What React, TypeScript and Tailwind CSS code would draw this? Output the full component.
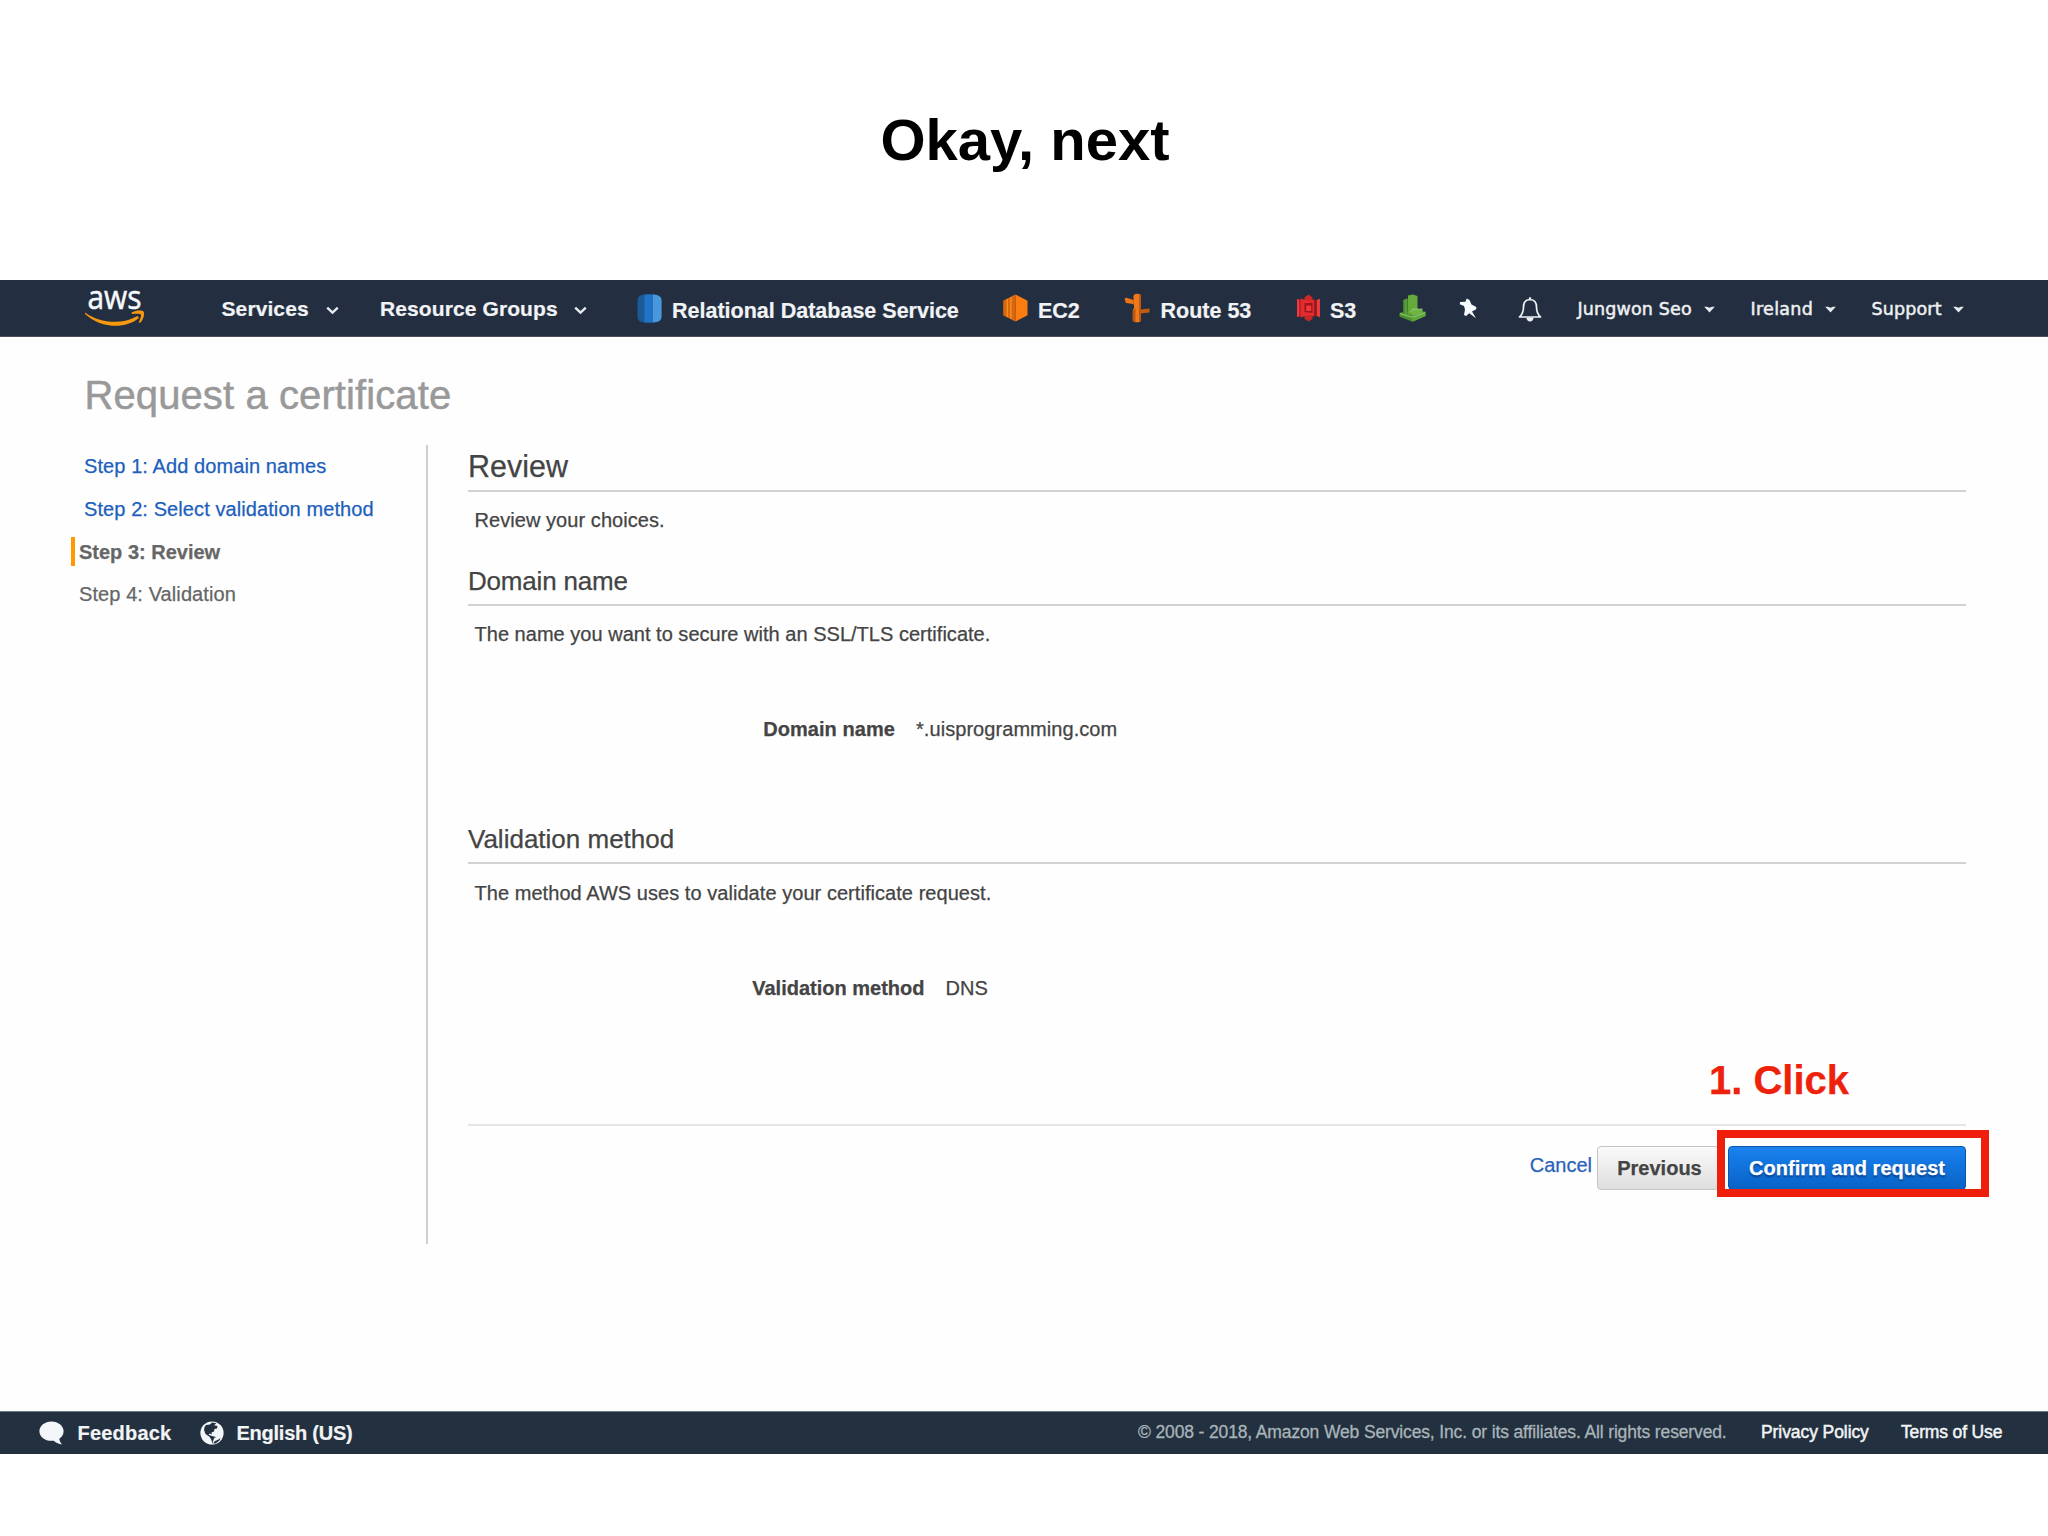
import type { ReactNode } from "react";

function AwsLogo() {
  return (
    <svg className="ml-[84px] h-[56px] w-[62px] shrink-0 overflow-visible" viewBox="0 -4 62 56">
      <text x="3.500" y="24.500" fontFamily="Open Sans, sans-serif" fontSize="32" fill="#f7fafc" stroke="#f7fafc" strokeWidth="0.500" textLength="54" lengthAdjust="spacingAndGlyphs">
        aws
      </text>
      <path d="M1 28.500 C16 39.500 38 41 53.500 32 L55 34 C41 45.500 17 44.500 1 30 Z" fill="#f7980f" />
      <path d="M47.500 28.600 C52 26 58 26 59.500 27.500 C61 29.500 59.500 36 56 39 L54.800 38.300 C56.500 34.500 57.500 31.500 57 30.600 C56 29.500 52 29.800 48 30.100 Z" fill="#f7980f" />
    </svg>
  );
}

function Chevron({ className }: { className: string }) {
  return (
    <svg className={`h-[9px] w-[13px] shrink-0 ${className}`} viewBox="0 0 13 9">
      <path d="M1.200 1.600 L6.500 6.600 L11.800 1.600" fill="none" stroke="#e6eaee" strokeWidth="2.400" />
    </svg>
  );
}

function Caret({ className }: { className: string }) {
  return (
    <svg className={`h-[7px] w-[11px] shrink-0 ${className}`} viewBox="0 0 11 7">
      <path d="M0.200 0.800 H3 L5.500 1.800 L8 0.800 H10.800 L5.500 6.600 Z" fill="#e6eaee" />
    </svg>
  );
}

function RdsIcon() {
  return (
    <svg className="ml-[49.500px] h-[29px] w-[25px] shrink-0" viewBox="0 0 25 29">
      <path d="M0.500 6 Q0.500 1 7.500 0.500 L17 0.500 Q24.500 1 24.500 6 V23 Q24.500 28 17 28.500 H7.500 Q0.500 28 0.500 23 Z" fill="#1b5a97" />
      <path d="M7.500 0.500 H16 V28.500 H7.500 Z" fill="#2272c8" />
      <path d="M16 0.500 Q24.500 1 24.500 6 V23 Q24.500 28 16 28.500 Z" fill="#4a98dc" />
    </svg>
  );
}

function Ec2Icon() {
  return (
    <svg className="ml-[42px] h-[28px] w-[25px] shrink-0" viewBox="0 0 26 29">
      <path d="M13 0.500 L25.500 7 V22 L13 28.500 L0.500 22 V7 Z" fill="#fb7d10" />
      <path d="M0.500 7 L4 5.300 V23.800 L0.500 22 Z M5 5 L7.500 3.600 V25.500 L5 24.200 Z M8.800 3.500 L13 1 V28 L8.800 25.600 Z" fill="#d9660b" />
      <path d="M4.500 5 V24 M8.200 3.500 V25.500" stroke="#f79a3e" strokeWidth="0.800" />
      <path d="M13 1 V28" stroke="#b95a10" strokeWidth="0.900" />
    </svg>
  );
}

function RouteIcon() {
  return (
    <svg className="ml-[42px] h-[30px] w-[27px] shrink-0" viewBox="0 0 27 30">
      <path d="M0.500 5.500 L2.500 4.800 L9.500 7 V11.500 L7.500 10.800 L2 10 Z" fill="#ef7414" />
      <path d="M16.500 16.500 L25.500 15.500 V19.500 L16.500 20.500 Z" fill="#c25a10" />
      <path d="M9.500 3 Q10 0.800 13 0.800 Q17 0.800 17 3 V27.500 Q16.700 29.300 13 29.300 Q9.300 29.300 8.800 27.500 V17 L10 15 V12 L9.500 11 Z" fill="#f07818" />
      <path d="M8.800 17.500 L11.500 15.500 V29 Q9.200 29 8.800 27.500 Z M15 1.100 Q17 1.500 17 3 V27.500 Q16.800 28.800 15 29.200 Z" fill="#bb5812" />
    </svg>
  );
}

function S3Icon() {
  return (
    <svg className="ml-[43px] h-[28px] w-[25px] shrink-0" viewBox="0 0 25 28">
      <path d="M8.500 3.500 L12.500 0.500 L16.500 3.500 V7 H8.500 Z" fill="#d2262a" />
      <path d="M8.500 21 H16.500 V25 L12.500 27.600 L8.500 25 Z" fill="#c9262a" />
      <path d="M1 4.800 L4.500 6 V22 L1 23.200 Z M24 4.800 L20.500 6 V22 L24 23.200 Z" fill="#f2393c" />
      <path d="M4.500 4.500 L12.500 7 L18.500 5.500 V22.500 L12.500 21 L4.500 23.500 Z" fill="#e62c30" />
      <path d="M18.500 5.500 L20.500 6 V22 L18.500 22.500 Z" fill="#9c1619" />
      <path d="M3.800 6 V22.500" stroke="#a3181b" strokeWidth="0.900" />
      <path d="M8.500 9.200 L16.500 8.700 V18.800 L8.500 18.300 Z" fill="#9c1619" />
      <path d="M10.200 11.500 H15.200 V17 H10.200 Z" fill="#f2393c" />
    </svg>
  );
}

function GreenServiceIcon() {
  return (
    <svg className="ml-[41px] h-[28px] w-[27px] shrink-0" viewBox="0 0 27 28">
      <path d="M0.500 19 L8 17 L26.500 17.500 V22 L13.500 27.800 L0.500 22.500 Z" fill="#4d942f" />
      <path d="M13.500 23.200 L26.500 18 V22 L13.500 27.800 Z" fill="#5fa83a" />
      <path d="M4 6 L8.500 4.500 V20 L4 20.500 Z" fill="#3f842c" />
      <path d="M5.500 5.500 L8.500 4.500 V20 L5.500 20.500 Z" fill="#5a9c37" />
      <path d="M9 1.500 L14 0.500 L18.500 2 V20 H9 Z" fill="#66aa3c" />
      <path d="M11.500 18 L14 14.800 L23.500 15.200 V19 L13.500 22 Z" fill="#6fb442" />
      <path d="M11.500 18 L14 15 L23.500 15.200 M1 19.500 L13.500 23.300 L26 18.500" fill="none" stroke="#a5d488" strokeWidth="0.800" />
    </svg>
  );
}

function PinIcon() {
  return (
    <svg className="ml-[33px] h-[21px] w-[19px] shrink-0" viewBox="0 0 19 21">
      <path d="M7.800 0.500 L10.500 2 L12.500 6.500 L17.300 9 L17.200 11.300 L13 13.500 L17 20.200 L10.300 15.300 L7 18 L5 17 L6 11.500 L5 8 L0.800 6.300 L1 4 L6.300 3.800 Z" fill="#f7fafc" />
    </svg>
  );
}

function BellIcon() {
  return (
    <svg className="ml-[39.500px] mt-[2px] h-[25px] w-[24px] shrink-0" viewBox="0 0 24 25">
      <path d="M12 2.500 C7.500 2.700 5.500 6 5.500 10 C5.500 15 4.500 17.300 1.500 20 H22.500 C19.500 17.300 18.500 15 18.500 10 C18.500 6 16.500 2.700 12 2.500 Z" fill="none" stroke="#edf1f5" strokeWidth="1.700" strokeLinejoin="round" />
      <path d="M12 0.300 V2.500" stroke="#edf1f5" strokeWidth="2.200" />
      <path d="M8.300 20.500 H15.700 Q15 24.500 12 24.500 Q9 24.500 8.300 20.500 Z" fill="#edf1f5" />
    </svg>
  );
}

function BubbleIcon() {
  return (
    <svg className="ml-[39px] h-[24px] w-[25px] shrink-0" viewBox="0 0 25 24">
      <path d="M12.500 0.500 C19.200 0.500 24.600 4.800 24.600 10.200 C24.600 13.300 23 16 20.300 17.700 C20.500 19.800 21.500 21.700 23.200 23.500 C20 23 17 21.800 14.800 19.700 C6.800 20.800 0.400 16.200 0.400 10.200 C0.400 4.800 5.800 0.500 12.500 0.500 Z" fill="#f4f7fa" />
    </svg>
  );
}

function GlobeIcon() {
  return (
    <svg className="ml-[27px] h-[24px] w-[24px] shrink-0" viewBox="0 0 24 24">
      <circle cx="12" cy="12" r="11.600" fill="#f4f7fa" />
      <path d="M6 4 L10 3.500 L12 1.500 L16.500 2.300 L14 4.300 L17.500 5 L17 7.500 L14.500 8 L14 10.500 L11.500 11.500 L12 13.600 L9.800 12.600 L8.500 13.500 L11.500 15 L14.500 15.500 L16.500 17.500 L13.500 20.500 L12.500 22.500 L11.200 18.500 L9.500 15.800 L5.500 13 L4 9 L4.500 6 Z" fill="#22303f" />
      <path d="M14.500 16.500 L18.500 18 L14 22.500 L12.800 20.500 Z" fill="#f4f7fa" />
      <path d="M15 20 L18.500 18.500 L20.500 16.800 L19.500 19.500 L15.500 22.500 L13 22.500 Z" fill="#22303f" />
    </svg>
  );
}

function NavLabel({ className, children }: { className: string; children: ReactNode }) {
  return (
    <span className={`shrink-0 whitespace-nowrap font-bold text-[#f1f3f5] [-webkit-text-stroke:0.200px_#f1f3f5] ${className}`}>{children}</span>
  );
}

function AccountLabel({ className, children }: { className: string; children: ReactNode }) {
  return (
    <span className={`shrink-0 whitespace-nowrap pt-[2px] text-[17.500px] tracking-[0.150px] text-[#eef0f2] [-webkit-text-stroke:0.500px_#eef0f2] font-['DejaVu_Sans',sans-serif] ${className}`}>
      {children}
    </span>
  );
}

function NavBar() {
  return (
    <nav className="flex h-[57px] items-center border-b border-[#4b4f60] bg-[#232f41]">
      <AwsLogo />
      <NavLabel className="ml-[75.500px] w-[88px] pt-[2px] text-[21px] tracking-[0.100px]">Services</NavLabel>
      <Chevron className="ml-[16px] mt-[4px]" />
      <NavLabel className="ml-[41.500px] w-[178px] pt-[2px] text-[21px] tracking-[0.100px]">Resource Groups</NavLabel>
      <Chevron className="ml-[16px] mt-[4px]" />
      <RdsIcon />
      <NavLabel className="ml-[10.500px] w-[289px] pt-[6px] text-[21.500px]">Relational Database Service</NavLabel>
      <Ec2Icon />
      <NavLabel className="ml-[10px] w-[44px] pt-[6px] text-[21.500px]">EC2</NavLabel>
      <RouteIcon />
      <NavLabel className="ml-[9.500px] w-[92px] pt-[6px] text-[21.500px]">Route 53</NavLabel>
      <S3Icon />
      <NavLabel className="ml-[9.500px] w-[28px] pt-[6px] text-[21.500px]">S3</NavLabel>
      <GreenServiceIcon />
      <PinIcon />
      <BellIcon />
      <AccountLabel className="ml-[36px] w-[116px]">Jungwon Seo</AccountLabel>
      <Caret className="ml-[10px] mt-[3px]" />
      <AccountLabel className="ml-[36px] w-[63px] tracking-[0.300px]">Ireland</AccountLabel>
      <Caret className="ml-[11px] mt-[3px]" />
      <AccountLabel className="ml-[36px] w-[71px]">Support</AccountLabel>
      <Caret className="ml-[10px] mt-[3px]" />
    </nav>
  );
}

function Steps() {
  return (
    <ul className="w-[428px] shrink-0 border-r-2 border-[#cfcfd2] pl-[71px] text-[20px] text-[#666] [-webkit-text-stroke:0.250px_currentColor]">
      <li className="flex h-[42.700px] items-center pl-[13px] tracking-[0.090px] text-[#1d5fbc]">Step 1: Add domain names</li>
      <li className="flex h-[42.700px] items-center pl-[13px] tracking-[0.090px] text-[#1d5fbc]">Step 2: Select validation method</li>
      <li className="flex h-[42.700px] items-center font-bold">
        <span className="mr-[4px] h-[29px] w-[4px] bg-[#ff9900]" />
        Step 3: Review
      </li>
      <li className="flex h-[42.700px] items-center pl-[8px] tracking-[0.090px]">Step 4: Validation</li>
    </ul>
  );
}

function Review() {
  return (
    <section className="relative ml-[40px] w-[1498px] text-[20px] leading-[28px] text-[#444] [-webkit-text-stroke:0.250px_currentColor]">
      <h2 className="border-b-2 border-[#d2d2d4] pb-[4px] pt-px text-[30.500px] leading-[40px]">Review</h2>
      <p className="mt-[14px] pl-[6.500px] tracking-[0.060px]">Review your choices.</p>

      <h3 className="mt-[30px] border-b-2 border-[#d2d2d4] pb-[6px] text-[26px] leading-[34px] tracking-[-0.200px]">Domain name</h3>
      <p className="mt-[14px] pl-[6.500px] tracking-[0.020px]">The name you want to secure with an SSL/TLS certificate.</p>
      <div className="mt-[67px] flex">
        <span className="w-[427px] text-right font-bold tracking-[0.060px]">Domain name</span>
        <span className="ml-[21px] tracking-[0.060px]">*.uisprogramming.com</span>
      </div>

      <h3 className="mt-[79px] border-b-2 border-[#d2d2d4] pb-[6px] text-[26px] leading-[34px]">Validation method</h3>
      <p className="mt-[15px] pl-[6.500px] tracking-[0.050px]">The method AWS uses to validate your certificate request.</p>
      <div className="mt-[67px] flex">
        <span className="w-[456.500px] text-right font-bold">Validation method</span>
        <span className="ml-[21px]">DNS</span>
      </div>

      <div className="mt-[122px] flex justify-end border-t-2 border-[#e6e6e8] pt-[20px]">
        <span className="mr-[5px] pt-[5px] text-[#2a63b8]">Cancel</span>
        <button className="h-[44px] w-[122px] rounded-[4px] border border-[#c4c4c6] bg-linear-to-b from-[#fafafa] to-[#dededf] pl-[3px] font-bold text-[#444]">
          Previous
        </button>
        <button className="ml-[9px] h-[44px] w-[238px] rounded-[4px] border border-[#0c56a8] bg-linear-to-b from-[#1a82ef] to-[#0862c6] font-bold tracking-[0.020px] text-white [text-shadow:0_2px_2px_rgba(0,30,90,0.6)]">
          Confirm and request
        </button>
      </div>

      <div className="absolute left-[1249px] top-[685px] h-[67px] w-[272px] border-8 border-[#f01f0c]" />
      <div className="absolute left-[1241px] top-[615px] whitespace-nowrap text-[40px] font-bold leading-[40px] text-[#ee220c]">1. Click</div>
    </section>
  );
}

function Footer() {
  return (
    <footer className="flex h-[43px] items-center border-t border-[#6d7782] bg-[#22303f] text-[20px] font-bold text-[#f1f3f5]">
      <BubbleIcon />
      <span className="ml-[13.500px] w-[95px] pb-px tracking-[0.200px] [-webkit-text-stroke:0.200px_#f1f3f5]">Feedback</span>
      <GlobeIcon />
      <span className="ml-[13px] whitespace-nowrap pb-px tracking-[-0.250px] [-webkit-text-stroke:0.200px_#f1f3f5]">English (US)</span>
      <div className="ml-auto mr-[44px] flex whitespace-nowrap pb-px text-[17.500px] font-normal">
        <span className="w-[590px] tracking-[-0.140px] text-[#a9b4b9] [-webkit-text-stroke:0.300px_#a9b4b9]">
          © 2008 - 2018, Amazon Web Services, Inc. or its affiliates. All rights reserved.
        </span>
        <span className="ml-[33px] w-[109px] tracking-[-0.080px] [-webkit-text-stroke:0.500px_#f1f3f5]">Privacy Policy</span>
        <span className="ml-[31px] w-[103px] tracking-[-0.150px] [-webkit-text-stroke:0.500px_#f1f3f5]">Terms of Use</span>
      </div>
    </footer>
  );
}

export default function App() {
  return (
    <div className="h-[1536px] w-[2048px] overflow-hidden bg-white font-['Liberation_Sans',Arial,sans-serif]">
      <header className="flex h-[280px] items-center justify-center">
        <h1 className="pb-[2px] pl-[2px] text-[58px] font-bold text-black">Okay, next</h1>
      </header>
      <NavBar />
      <main className="h-[1074px] bg-[#fefefe] pt-[28px]">
        <h2 className="pl-[84.500px] text-[40px] leading-[60px] tracking-[0.100px] text-[#999] [-webkit-text-stroke:0.500px_#999]">Request a certificate</h2>
        <div className="mt-[20px] flex h-[799px]">
          <Steps />
          <Review />
        </div>
      </main>
      <Footer />
    </div>
  );
}
